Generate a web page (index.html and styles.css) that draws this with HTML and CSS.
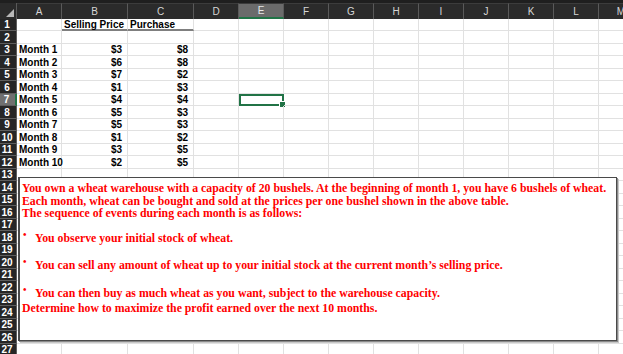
FILE: index.html
```html
<!DOCTYPE html>
<html lang="en">

<head>
    <meta charset="UTF-8">
    <meta name="viewport" content="width=device-width, initial-scale=1.0">
    <title>Wheat Warehouse</title>
    <link rel="stylesheet" href="styles.css">
</head>

<body>

    <div class="toolbar-edge">
        <span class="btn-edge w1"></span>
        <span class="btn-edge w2"></span>
        <span class="btn-edge w3"></span>
        <span class="btn-edge w4"></span>
    </div>

    <div class="sheet" id="sheet"></div>

    <div class="textbox">
        <div class="line">You own a wheat warehouse with a capacity of 20 bushels. At the beginning of month 1, you have 6 bushels of wheat.</div>
        <div class="line">Each month, wheat can be bought and sold at the prices per one bushel shown in the above table.</div>
        <div class="line">The sequence of events during each month is as follows:</div>
        <div class="line item first"><span class="bullet">&bull;</span>You observe your initial stock of wheat.</div>
        <div class="line item second"><span class="bullet">&bull;</span>You can sell any amount of wheat up to your initial stock at the current month&rsquo;s selling price.</div>
        <div class="line item third"><span class="bullet">&bull;</span>You can then buy as much wheat as you want, subject to the warehouse capacity.</div>
        <div class="line last">Determine how to maximize the profit earned over the next 10 months.</div>
    </div>

    <script>
        const cols = ["A", "B", "C", "D", "E", "F", "G", "H", "I", "J", "K", "L", "M"];
        const selling = [3, 6, 7, 1, 4, 5, 5, 1, 3, 2];
        const purchase = [8, 8, 2, 3, 4, 3, 3, 2, 5, 5];
        const sheet = document.getElementById("sheet");

        function addCell(cls, text) {
            const el = document.createElement("div");
            el.className = cls;
            el.textContent = text || "";
            sheet.appendChild(el);
            return el;
        }

        // column headers
        addCell("corner");
        cols.forEach(c => addCell(c === "E" ? "col-head active" : "col-head", c));

        // rows
        for (let r = 1; r <= 28; r++) {
            addCell(r === 7 ? "row-head active" : "row-head", r);
            cols.forEach(c => {
                let cls = "cell";
                let text = "";
                if (r === 1 && c === "B") { text = "Selling Price"; cls += " title"; }
                if (r === 1 && c === "C") { text = "Purchase"; cls += " title"; }
                if (r >= 3 && r <= 12) {
                    const i = r - 3;
                    if (c === "A") text = "Month " + (i + 1);
                    if (c === "B") { text = "$" + selling[i]; cls += " num"; }
                    if (c === "C") { text = "$" + purchase[i]; cls += " num"; }
                }
                if (r === 7 && c === "E") cls += " selected";
                addCell(cls, text);
            });
        }
    </script>

</body>

</html>
```

FILE: styles.css
```css
* {
    margin: 0;
    padding: 0;
    box-sizing: border-box;
}

body {
    background: #ffffff;
    font-family: "Liberation Sans", Arial, sans-serif;
    overflow: hidden;
    width: 623px;
    height: 354px;
}

.toolbar-edge {
    height: 3px;
    background: #1f1f1f;
    display: flex;
    gap: 5px;
    overflow: hidden;
}

.btn-edge {
    height: 3px;
    margin-top: -3px;
    border: 1px solid #6a6a6a;
    border-radius: 0 0 4px 4px;
    background: #2a2a2a;
}

.w1 { width: 26px; }
.w2 { width: 47px; }
.w3 { width: 53px; margin-left: 10px; }
.w4 { width: 60px; }

.sheet {
    display: grid;
    grid-template-columns: 17px 45px 66px 66px repeat(10, 45px);
    grid-template-rows: 16px repeat(14, 12px 13px);
    width: 644px;
}

.corner {
    background: #2b2b2b;
    border-right: 1px solid #5a5a5a;
    position: relative;
}

.corner::after {
    content: "";
    position: absolute;
    right: 2px;
    bottom: 2px;
    border-left: 8px solid transparent;
    border-bottom: 8px solid #b8b8b8;
}

.col-head {
    background: #2b2b2b;
    color: #d6d6d6;
    font-size: 10px;
    text-align: center;
    line-height: 16px;
    border-right: 1px solid #5a5a5a;
    border-top: 1px solid #3c3c3c;
}

.col-head.active {
    background: #6b6b6b;
    color: #e8e8e8;
    border-bottom: 2px solid #217346;
    line-height: 14px;
}

.row-head {
    background: #262626;
    color: #ffffff;
    font-size: 10px;
    font-weight: bold;
    text-align: center;
    padding-right: 2px;
    display: flex;
    align-items: center;
    justify-content: center;
    border-bottom: 1px solid #5e5e5e;
    border-right: 1px solid #5e5e5e;
}

.row-head.active {
    background: #707070;
    border-right: 2px solid #217346;
}

.cell {
    font-size: 10px;
    font-weight: bold;
    color: #000000;
    border-right: 1px solid #e1e1e1;
    border-bottom: 1px solid #e1e1e1;
    padding: 0 2px;
    display: flex;
    align-items: center;
    white-space: nowrap;
    position: relative;
}

.cell.num {
    justify-content: flex-end;
    padding-right: 5px;
}

.cell.title {
    border-bottom: 2px solid #7f7f7f;
    overflow: visible;
}

.cell.selected {
    border: 2px solid #217346;
}

.cell.selected::after {
    content: "";
    position: absolute;
    right: -4px;
    bottom: -4px;
    width: 5px;
    height: 5px;
    background: #217346;
    border: 1px solid #ffffff;
}

.textbox {
    position: absolute;
    left: 18px;
    top: 177px;
    width: 599px;
    height: 164px;
    background: #ffffff;
    border: 1px solid #4a4a4a;
    border-left: 2px solid #4a4a4a;
    box-shadow: 1px 1px 0 #8a8a8a, 2px 2px 0 #c8c8c8;
    padding: 4px 3px 4px 2px;
    font-family: "Liberation Serif", "Times New Roman", serif;
    font-weight: bold;
    font-size: 11.8px;
    color: #ff0000;
}

.line {
    line-height: 12.5px;
    white-space: nowrap;
}

.item {
    display: flex;
}

.item.first { margin-top: 12.5px; }
.item.second { margin-top: 14.5px; }
.item.third { margin-top: 15.5px; }
.last { margin-top: 2.5px; }

.bullet {
    width: 13px;
    padding-left: 1px;
    font-size: 10px;
    line-height: 6px;
}
```
